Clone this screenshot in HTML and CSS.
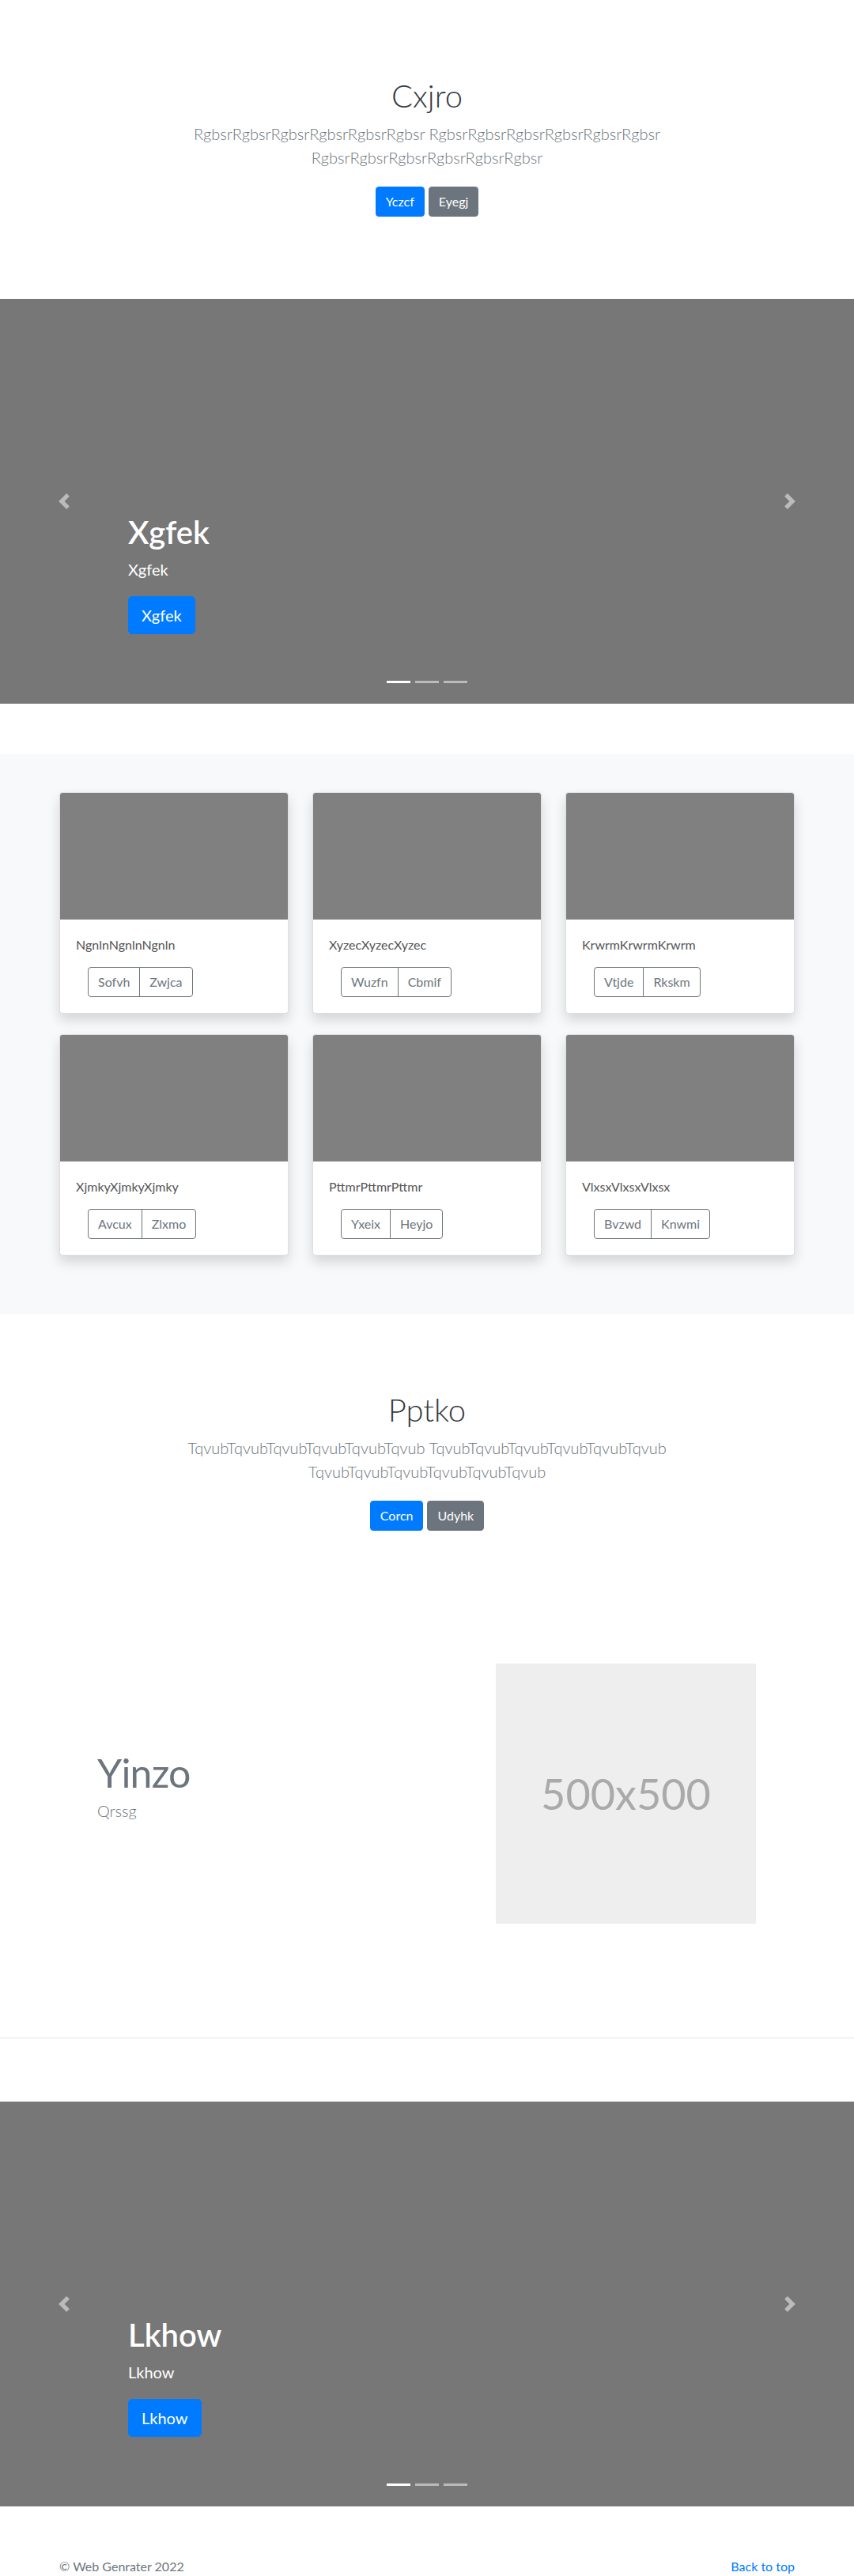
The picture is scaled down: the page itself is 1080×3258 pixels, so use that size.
FILE: index.html
```html
<!DOCTYPE html>
<html lang="en">
<head>
<meta charset="utf-8">
<title>Web Genrater</title>
<link rel="stylesheet" href="styles.css">
</head>
<body>
<main>
  <section class="hero">
    <h1 class="hero-title">Cxjro</h1>
    <p class="hero-lead">RgbsrRgbsrRgbsrRgbsrRgbsrRgbsr RgbsrRgbsrRgbsrRgbsrRgbsrRgbsr RgbsrRgbsrRgbsrRgbsrRgbsrRgbsr</p>
    <p class="hero-actions"><a href="#" class="btn btn-primary">Yczcf</a><a href="#" class="btn btn-secondary">Eyegj</a></p>
  </section>

  <div class="carousel carousel-first">
    <div class="caption">
      <h2 class="caption-title">Xgfek</h2>
      <p class="caption-text">Xgfek</p>
      <a href="#" class="btn btn-lg btn-primary">Xgfek</a>
    </div>
    <a href="#" class="ctrl ctrl-prev"><svg viewBox="0 0 8 8" fill="#fff"><path d="M5.25 0l-4 4 4 4 1.5-1.5L4.25 4l2.5-2.5L5.25 0z"/></svg></a>
    <a href="#" class="ctrl ctrl-next"><svg viewBox="0 0 8 8" fill="#fff"><path d="M2.75 0l-1.5 1.5L3.75 4l-2.5 2.5L2.75 8l4-4-4-4z"/></svg></a>
    <ol class="indicators"><li class="active"></li><li></li><li></li></ol>
  </div>

  <section class="album">
    <div class="container">
      <div class="card-grid">
        <div class="card">
          <div class="card-img"></div>
          <div class="card-body">
            <p class="card-text">NgnlnNgnlnNgnln</p>
            <div class="btn-group"><a href="#" class="btn btn-outline">Sofvh</a><a href="#" class="btn btn-outline">Zwjca</a></div>
          </div>
        </div>
        <div class="card">
          <div class="card-img"></div>
          <div class="card-body">
            <p class="card-text">XyzecXyzecXyzec</p>
            <div class="btn-group"><a href="#" class="btn btn-outline">Wuzfn</a><a href="#" class="btn btn-outline">Cbmif</a></div>
          </div>
        </div>
        <div class="card">
          <div class="card-img"></div>
          <div class="card-body">
            <p class="card-text">KrwrmKrwrmKrwrm</p>
            <div class="btn-group"><a href="#" class="btn btn-outline">Vtjde</a><a href="#" class="btn btn-outline">Rkskm</a></div>
          </div>
        </div>
        <div class="card">
          <div class="card-img"></div>
          <div class="card-body">
            <p class="card-text">XjmkyXjmkyXjmky</p>
            <div class="btn-group"><a href="#" class="btn btn-outline">Avcux</a><a href="#" class="btn btn-outline">Zlxmo</a></div>
          </div>
        </div>
        <div class="card">
          <div class="card-img"></div>
          <div class="card-body">
            <p class="card-text">PttmrPttmrPttmr</p>
            <div class="btn-group"><a href="#" class="btn btn-outline">Yxeix</a><a href="#" class="btn btn-outline">Heyjo</a></div>
          </div>
        </div>
        <div class="card">
          <div class="card-img"></div>
          <div class="card-body">
            <p class="card-text">VlxsxVlxsxVlxsx</p>
            <div class="btn-group"><a href="#" class="btn btn-outline">Bvzwd</a><a href="#" class="btn btn-outline">Knwmi</a></div>
          </div>
        </div>
      </div>
    </div>
  </section>

  <section class="hero">
    <h1 class="hero-title">Pptko</h1>
    <p class="hero-lead">TqvubTqvubTqvubTqvubTqvubTqvub TqvubTqvubTqvubTqvubTqvubTqvub TqvubTqvubTqvubTqvubTqvubTqvub</p>
    <p class="hero-actions"><a href="#" class="btn btn-primary">Corcn</a><a href="#" class="btn btn-secondary">Udyhk</a></p>
  </section>

  <div class="featurette">
    <div class="feat-text">
      <h2 class="feat-heading">Yinzo</h2>
      <p class="feat-lead">Qrssg</p>
    </div>
    <div class="feat-img">500x500</div>
  </div>

  <hr class="divider">

  <div class="carousel">
    <div class="caption">
      <h2 class="caption-title">Lkhow</h2>
      <p class="caption-text">Lkhow</p>
      <a href="#" class="btn btn-lg btn-primary">Lkhow</a>
    </div>
    <a href="#" class="ctrl ctrl-prev"><svg viewBox="0 0 8 8" fill="#fff"><path d="M5.25 0l-4 4 4 4 1.5-1.5L4.25 4l2.5-2.5L5.25 0z"/></svg></a>
    <a href="#" class="ctrl ctrl-next"><svg viewBox="0 0 8 8" fill="#fff"><path d="M2.75 0l-1.5 1.5L3.75 4l-2.5 2.5L2.75 8l4-4-4-4z"/></svg></a>
    <ol class="indicators"><li class="active"></li><li></li><li></li></ol>
  </div>
</main>

<footer class="footer">
  <div class="container footer-row">
    <p>© Web Genrater 2022</p>
    <p><a href="#">Back to top</a></p>
  </div>
</footer>
</body>
</html>
```

FILE: styles.css
```css
* { box-sizing: border-box; }
html, body { margin: 0; padding: 0; }
body {
  font-family: Lato, "Open Sans", sans-serif;
  font-size: 16px;
  line-height: 1.5;
  color: #212529;
  background: #fff;
}
a { text-decoration: none; }

.btn {
  display: inline-block;
  font-size: 16px;
  line-height: 24px;
  padding: 6px 12px;
  border: 1px solid transparent;
  border-radius: 4px;
  font-weight: 400;
}
.btn-primary { background: #007bff; border-color: #007bff; color: #fff; }
.btn-secondary { background: #6c757d; border-color: #6c757d; color: #fff; }
.btn-lg { font-size: 20px; line-height: 30px; padding: 8px 16px; border-radius: 5px; }
.btn-outline { color: #6c757d; border-color: #6c757d; background: transparent; }

/* hero sections */
.hero { padding: 97px 15px 104px; text-align: center; }
.hero-title { margin: 0 0 9px; font-size: 40px; line-height: 48px; font-weight: 300; color: #343a40; }
.hero-lead {
  max-width: 680px;
  margin: 0 auto 22px;
  font-size: 20px;
  line-height: 30px;
  font-weight: 300;
  color: #6c757d;
}
.hero-actions { margin: 0; display: flex; justify-content: center; gap: 5px; }

/* carousel */
.carousel { position: relative; height: 512px; background: #777; overflow: hidden; }
.carousel-first { margin-bottom: 64px; }
.caption {
  position: absolute;
  left: 162px;
  right: 162px;
  bottom: 88px;
  color: #fff;
  display: flex;
  flex-direction: column;
  align-items: flex-start;
}
.caption-title { margin: 0 0 8px; font-size: 40px; line-height: 48px; font-weight: 600; }
.caption-text { margin: 0 0 19px; font-size: 20px; line-height: 30px; }
.ctrl {
  position: absolute;
  top: 0;
  bottom: 0;
  width: 162px;
  display: flex;
  align-items: center;
  justify-content: center;
  opacity: .5;
}
.ctrl-prev { left: 0; }
.ctrl-next { right: 0; }
.ctrl svg { width: 20px; height: 20px; display: block; }
.indicators {
  position: absolute;
  left: 0;
  right: 0;
  bottom: 26px;
  display: flex;
  justify-content: center;
  gap: 6px;
  margin: 0;
  padding: 0;
  list-style: none;
}
.indicators li { width: 30px; height: 3px; background: rgba(255,255,255,.5); }
.indicators li.active { background: #fff; }

/* album */
.album { background: #f8f9fa; padding: 48px 0 74px; }
.container { max-width: 960px; margin: 0 auto; padding: 0 15px; }
.card-grid {
  display: grid;
  grid-template-columns: repeat(3, 1fr);
  column-gap: 30px;
  row-gap: 26px;
}
.card {
  background: #fff;
  border: 1px solid rgba(0,0,0,.125);
  border-radius: 4px;
  overflow: hidden;
  box-shadow: 0 8px 16px rgba(0,0,0,.15);
}
.card-img { height: 160px; background: #808080; }
.card-body { padding: 20px; }
.card-text { margin: 0 0 16px; line-height: 24px; color: #555; }
.btn-group { display: inline-flex; margin-left: 15px; }
.btn-group .btn:first-child { border-radius: 4px 0 0 4px; }
.btn-group .btn + .btn { margin-left: -1px; border-radius: 0 4px 4px 0; }

/* featurette */
.featurette {
  max-width: 960px;
  margin: 0 auto;
  padding: 64px 64px 64px 63px;
  display: flex;
  align-items: center;
}
.feat-text { flex: 1; }
.feat-heading {
  margin: 0 0 8px;
  font-size: 50px;
  line-height: 50px;
  font-weight: 400;
  color: #6c757d;
  letter-spacing: -0.8px;
}
.feat-lead { margin: 0 0 16px; font-size: 20px; line-height: 30px; font-weight: 300; color: #6c757d; }
.feat-img {
  width: 329px;
  height: 329px;
  flex: none;
  background: #eee;
  color: #aaa;
  display: flex;
  align-items: center;
  justify-content: center;
  font-size: 54px;
}

.divider { margin: 80px 0; border: 0; border-top: 1px solid #e5e5e5; height: 0; }

/* footer */
.footer { padding: 64px 0 48px; color: #6c757d; }
.footer-row { display: flex; justify-content: space-between; }
.footer p { margin: 0; line-height: 24px; }
.footer a { color: #007bff; }
```
